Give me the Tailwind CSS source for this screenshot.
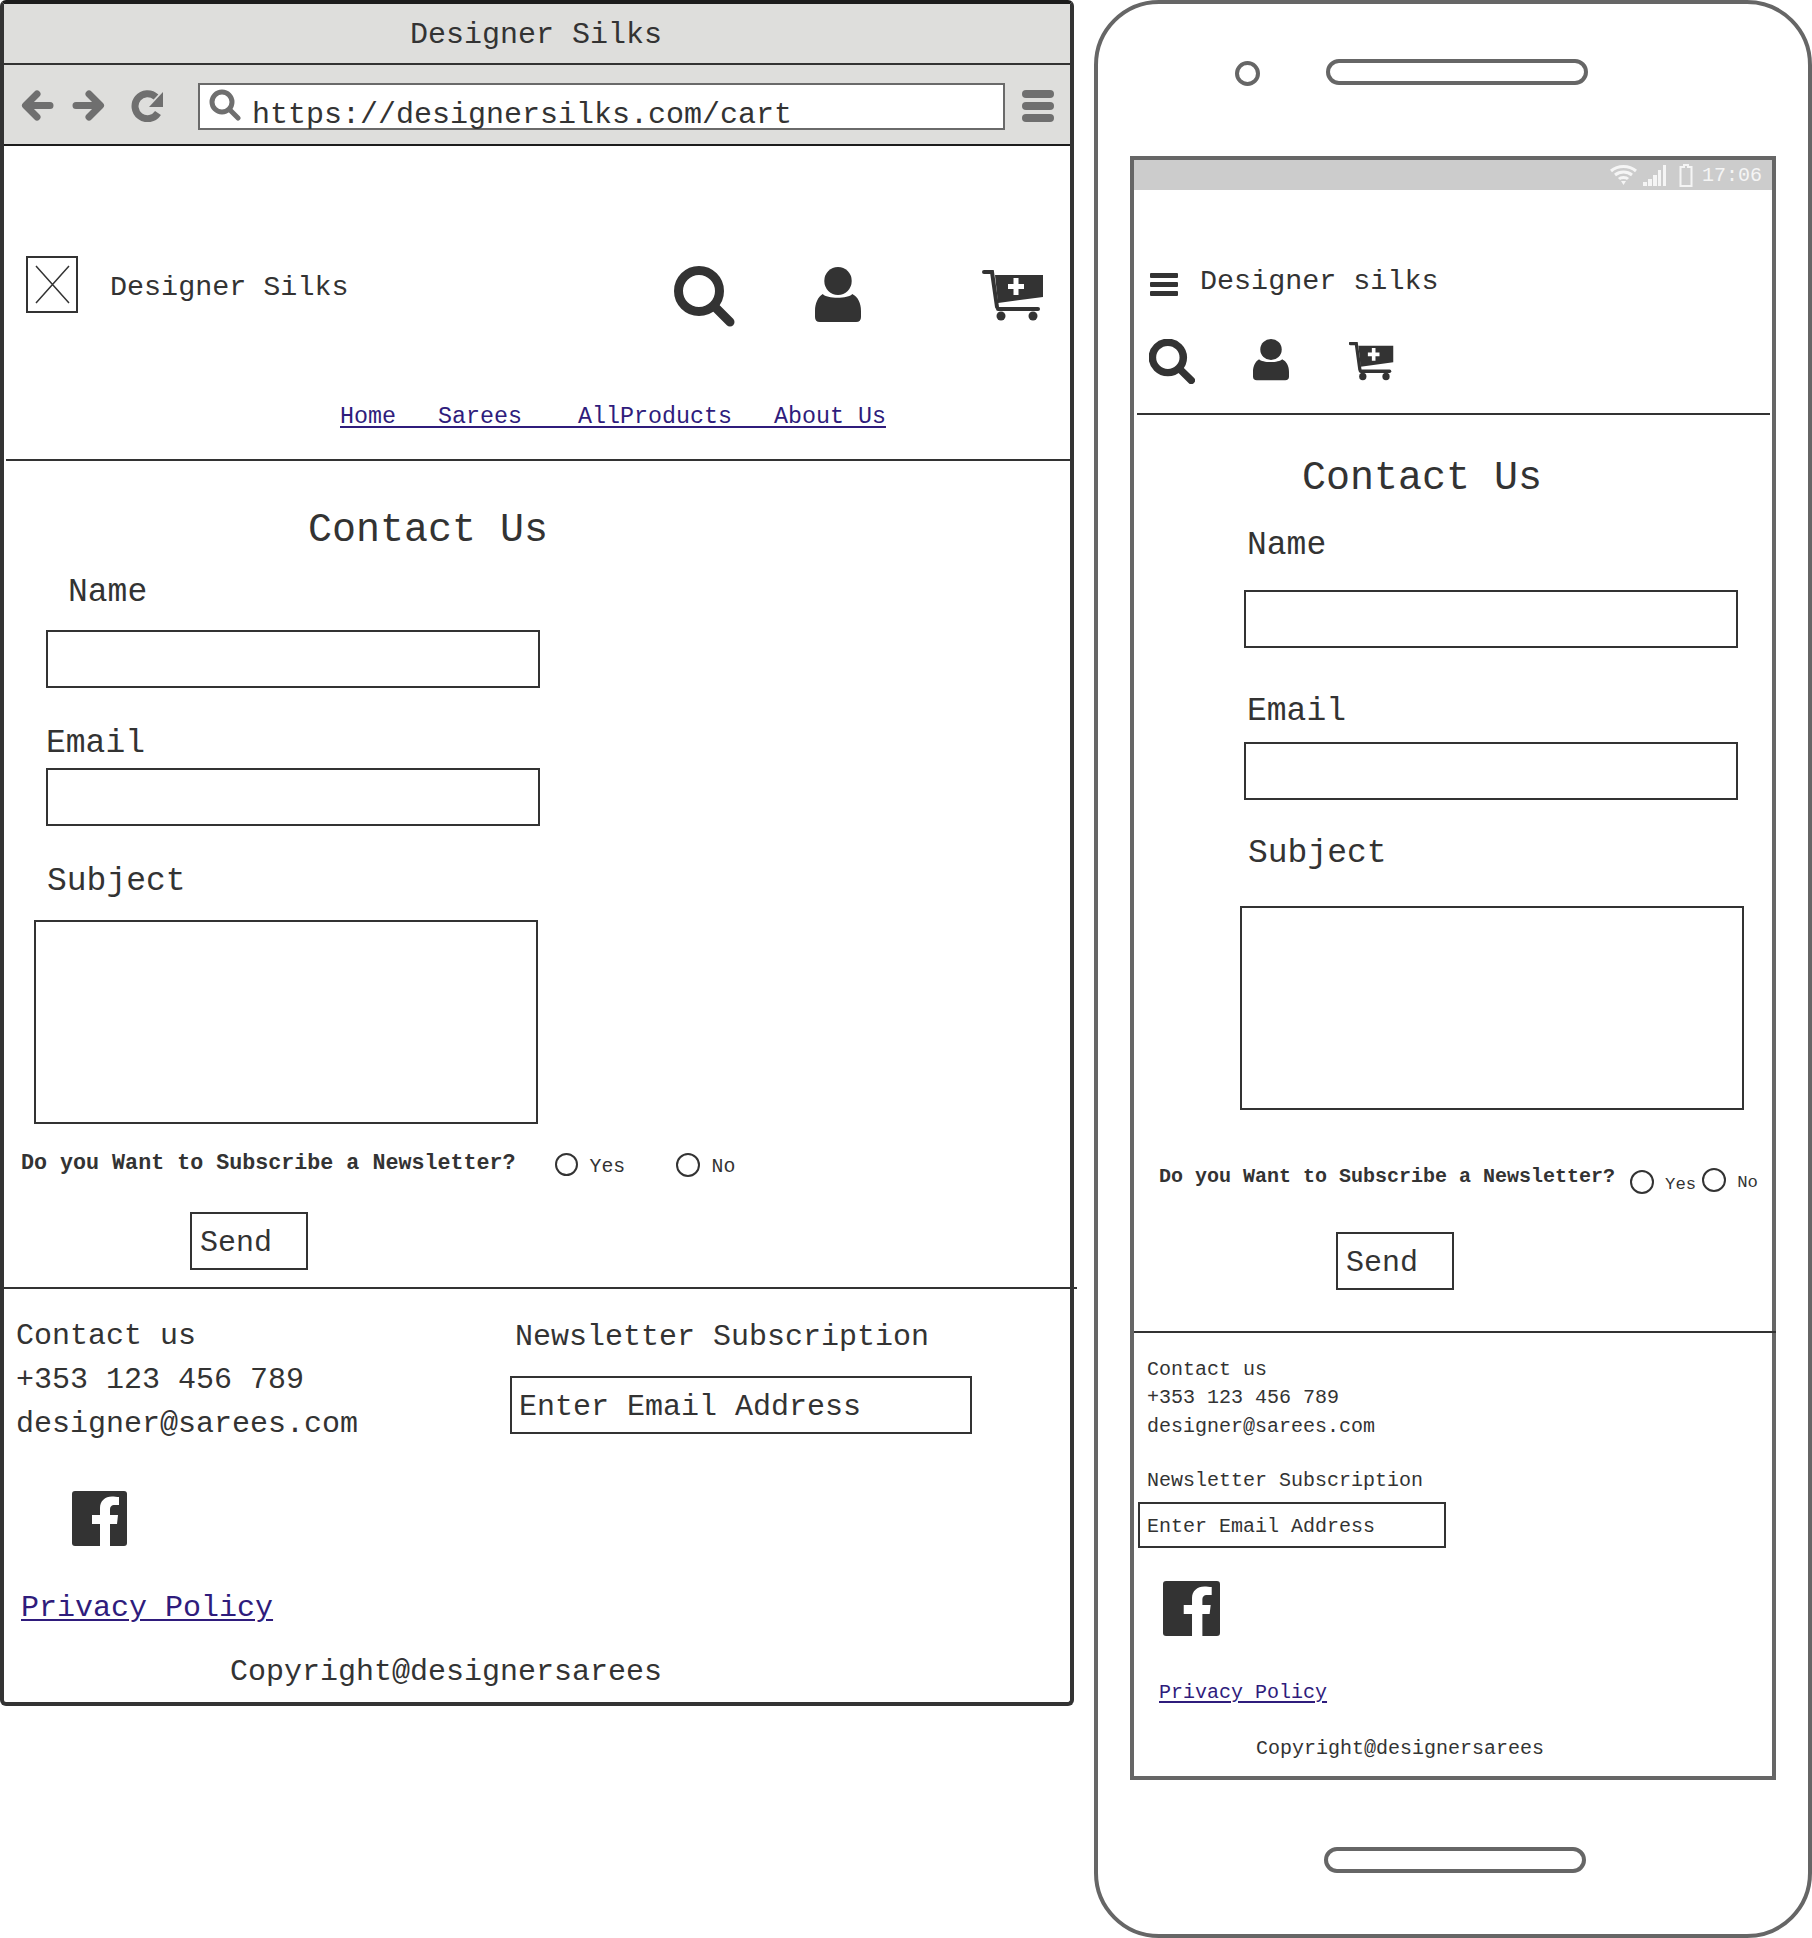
<!DOCTYPE html>
<html lang="en">
<head>
  <meta charset="UTF-8" />
  <title>Designer Silks - Contact Us wireframe</title>
  <script src="https://cdn.jsdelivr.net/npm/@tailwindcss/browser@4"></script>
</head>
<body class="bg-white">
  <div class="flex items-start w-[1812px] h-[1938px] overflow-hidden font-['Liberation_Mono',monospace] text-[#333]">

    <!-- Desktop browser -->
    <div class="w-[1074px] h-[1706px] shrink-0 flex flex-col border-4 border-[#333] border-t-[#1c1c1c] rounded-[6px] bg-white">
      <div class="h-[61px] shrink-0 flex items-center justify-center pt-[2px] pr-[2px] bg-[#dededc] border-b-2 border-[#333] text-[30px] leading-[36px]">Designer Silks</div>
      <div class="h-[81px] shrink-0 flex items-start pl-[17px] bg-[#dededc] border-b-2 border-[#1c1c1c]">
        <svg class="mt-[24px] w-[33px] h-[33px]" viewBox="0 0 33 33" fill="none" stroke="#6f6f6f" stroke-width="7" stroke-linecap="round" stroke-linejoin="round"><path d="M5 16.5H29M16 5L4.5 16.5L16 28"/></svg>
        <svg class="mt-[24px] ml-[18px] w-[33px] h-[33px]" viewBox="0 0 33 33" fill="none" stroke="#6f6f6f" stroke-width="7" stroke-linecap="round" stroke-linejoin="round"><path d="M28 16.5H4M17 5L28.5 16.5L17 28"/></svg>
        <svg class="mt-[24px] ml-[26px] w-[33px] h-[33px]" viewBox="0 0 33 33" fill="none"><path d="M25 8A12.5 12.5 0 1 0 27 24" stroke="#6f6f6f" stroke-width="7"/><path d="M18 18H32V3Z" fill="#6f6f6f"/></svg>
        <div class="mt-[18px] ml-[34px] w-[807px] h-[47px] flex items-start bg-white border-2 border-[#6a6a6a]">
          <svg class="mt-[4px] ml-[9px] w-[32px] h-[32px] shrink-0" viewBox="0 0 32 32" fill="none" stroke="#6f6f6f" stroke-linecap="round"><circle cx="13" cy="13" r="10" stroke-width="5"/><path d="M21 21L29 29" stroke-width="5"/></svg>
          <span class="mt-[12px] ml-[11px] text-[30px] leading-[36px]">https://designersilks.com/cart</span>
        </div>
        <svg class="mt-[24px] ml-[17px] w-[32px] h-[33px]" viewBox="0 0 32 33" fill="#6f6f6f"><rect y="1" width="32" height="8" rx="4"/><rect y="13" width="32" height="8" rx="4"/><rect y="25" width="32" height="8" rx="4"/></svg>
      </div>

      <div class="flex items-start h-[71px] mt-[110px] ml-[22px] shrink-0">
        <div class="w-[52px] h-[57px] shrink-0 border-2 border-[#333]">
          <svg class="w-full h-full" viewBox="0 0 48 53" stroke="#333" stroke-width="1.5"><path d="M8 8L41 45M41 8L8 45"/></svg>
        </div>
        <span class="mt-[15px] ml-[32px] w-[238px] shrink-0 whitespace-nowrap text-[28.4px] leading-[34px]">Designer Silks</span>
        <svg class="mt-[10px] ml-[326px] w-[61px] h-[61px] shrink-0" viewBox="0 0 61 61" fill="none" stroke="#333" stroke-width="9" stroke-linecap="round"><circle cx="25" cy="25" r="20.5"/><path d="M41 41L56 56"/></svg>
        <svg class="mt-[11px] ml-[80px] w-[46px] h-[56px] shrink-0" viewBox="0 0 47 56" preserveAspectRatio="none" fill="#333"><circle cx="23.5" cy="14" r="14"/><path d="M8 27C12 32 34 32 38 27C44 30 47 36 47 44V50Q47 55 42 55H5Q0 55 0 50V44C0 36 3 30 8 27Z"/></svg>
        <svg class="mt-[14px] ml-[121px] w-[62px] h-[52px] shrink-0" viewBox="0 0 62 52"><path d="M2 2H10L15 37" fill="none" stroke="#333" stroke-width="4" stroke-linecap="round"/><path d="M13 5H61V27L16 33Z" fill="#333"/><path d="M16 39H56" stroke="#333" stroke-width="4" stroke-linecap="round"/><circle cx="19" cy="46" r="4.5" fill="#333"/><circle cx="51" cy="46" r="4.5" fill="#333"/><path d="M34 8V25M26 16.5H42" stroke="#fff" stroke-width="5"/></svg>
      </div>

      <nav class="mt-[78px] ml-[336px] h-[24px] shrink-0 text-[23.33px] leading-[24px] text-[#2f1c7c]">
        <a href="#" class="whitespace-pre underline decoration-2 underline-offset-[3px]">Home   Sarees    AllProducts   About Us</a>
      </nav>
      <div class="mt-[30px] ml-[2px] h-[2px] shrink-0 bg-[#333]"></div>

      <h1 class="mt-[46px] ml-[304px] text-[40px] leading-[48px]">Contact Us</h1>
      <label class="mt-[18px] ml-[64px] text-[33px] leading-[40px]">Name</label>
      <div class="mt-[17px] ml-[42px] w-[494px] h-[58px] shrink-0 border-2 border-[#333]"></div>
      <label class="mt-[36px] ml-[42px] text-[33px] leading-[40px]">Email</label>
      <div class="mt-[4px] ml-[42px] w-[494px] h-[58px] shrink-0 border-2 border-[#333]"></div>
      <label class="mt-[36px] ml-[43px] text-[33px] leading-[40px]">Subject</label>
      <div class="mt-[18px] ml-[30px] w-[504px] h-[204px] shrink-0 border-2 border-[#333]"></div>

      <div class="flex items-start mt-[23px] ml-[17px] h-[30px] shrink-0">
        <span class="mt-[2px] text-[21.7px] leading-[30px] font-bold">Do you Want to Subscribe a Newsletter?</span>
        <span class="mt-[6px] ml-[39px] w-[23px] h-[23px] shrink-0 rounded-full border-2 border-[#333]"></span>
        <span class="mt-[8px] ml-[12px] w-[36px] text-[19.8px] leading-[24px]">Yes</span>
        <span class="mt-[6px] ml-[50px] w-[24px] h-[24px] shrink-0 rounded-full border-2 border-[#333]"></span>
        <span class="mt-[8px] ml-[12px] text-[19.8px] leading-[24px]">No</span>
      </div>

      <div class="mt-[35px] ml-[186px] w-[118px] h-[58px] shrink-0 flex items-center pl-[8px] pt-[3px] border-2 border-[#333] text-[30px] leading-[36px]">Send</div>
      <div class="mt-[17px] w-[1073px] h-[2px] shrink-0 bg-[#333]"></div>

      <footer class="flex shrink-0 text-[30px] leading-[36px]">
        <div class="w-[506px] pl-[12px]">
          <p class="mt-[29px]">Contact us</p>
          <p class="mt-[8px]">+353 123 456 789</p>
          <p class="mt-[8px]">designer@sarees.com</p>
        </div>
        <div>
          <p class="mt-[30px] ml-[5px]">Newsletter Subscription</p>
          <div class="mt-[21px] w-[462px] h-[58px] flex items-center pl-[7px] pt-[3px] border-2 border-[#333]">Enter Email Address</div>
        </div>
      </footer>

      <svg class="mt-[49px] ml-[68px] w-[55px] h-[55px] shrink-0" viewBox="0 0 55 55"><rect width="55" height="55" rx="3" fill="#333"/><path d="M38 55V33H45L46 24H38V19C38 16 39 14 43 14H47V6C45 6 42 5.5 40 5.5C33 5.5 28 10 28 17V24H20V33H28V55Z" fill="#fff"/></svg>
      <a href="#" class="mt-[44px] ml-[17px] text-[30px] leading-[36px] underline decoration-2 underline-offset-[3px] text-[#2f1c7c]">Privacy Policy</a>
      <p class="mt-[28px] ml-[226px] text-[30px] leading-[36px]">Copyright@designersarees</p>
    </div>

    <!-- Phone -->
    <div class="ml-[20px] w-[718px] h-[1938px] shrink-0 flex flex-col border-4 border-[#666] rounded-[65px] bg-white">
      <div class="flex items-start mt-[55px] ml-[137px] h-[26px] shrink-0">
        <span class="mt-[2px] w-[25px] h-[25px] shrink-0 rounded-full border-4 border-[#666]"></span>
        <span class="ml-[66px] w-[262px] h-[26px] shrink-0 rounded-full border-4 border-[#666]"></span>
      </div>

      <div class="mt-[71px] ml-[32px] w-[646px] h-[1624px] shrink-0 flex flex-col border-4 border-[#666]">
        <div class="h-[30px] shrink-0 flex items-center justify-end pr-[10px] bg-[#cccccc] text-[#f5f5f5]">
          <svg class="w-[27px] h-[20px]" viewBox="0 0 27 20" fill="none" stroke="#f5f5f5" stroke-width="3"><path d="M1 6C8 0 19 0 26 6M5 10C10 6 17 6 22 10M9 14C11 12 16 12 18 14"/><path d="M11 16H16L13.5 20Z" fill="#f5f5f5" stroke="none"/></svg>
          <svg class="ml-[6px] w-[24px] h-[21px]" viewBox="0 0 24 21" fill="#f5f5f5"><rect x="0" y="17" width="4" height="4"/><rect x="5" y="14" width="4" height="7"/><rect x="10" y="10" width="4" height="11"/><rect x="15" y="5" width="3" height="16"/><rect x="20" y="0" width="3" height="21"/></svg>
          <svg class="ml-[12px] w-[14px] h-[23px]" viewBox="0 0 14 23" fill="none" stroke="#f5f5f5" stroke-width="2"><path d="M5 1H9V3H12.5V22H1.5V3H5Z"/></svg>
          <span class="ml-[9px] pt-[2px] text-[20px] leading-[24px]">17:06</span>
        </div>

        <div class="flex items-start mt-[75px] ml-[16px] h-[34px] shrink-0">
          <svg class="mt-[8px] w-[28px] h-[23px] shrink-0" viewBox="0 0 28 23" fill="#333"><rect width="28" height="5" rx="1"/><rect y="9" width="28" height="5" rx="1"/><rect y="18" width="28" height="5" rx="1"/></svg>
          <span class="ml-[22px] text-[28.4px] leading-[34px]">Designer silks</span>
        </div>
        <div class="flex items-start mt-[40px] ml-[15px] h-[45px] shrink-0">
          <svg class="w-[46px] h-[45px] shrink-0" viewBox="0 0 61 61" preserveAspectRatio="none" fill="none" stroke="#333" stroke-width="10" stroke-linecap="round"><circle cx="25" cy="25" r="20.5"/><path d="M41 41L56 56"/></svg>
          <svg class="ml-[58px] w-[36px] h-[42px] shrink-0" viewBox="0 0 47 56" preserveAspectRatio="none" fill="#333"><circle cx="23.5" cy="14" r="14"/><path d="M8 27C12 32 34 32 38 27C44 30 47 36 47 44V50Q47 55 42 55H5Q0 55 0 50V44C0 36 3 30 8 27Z"/></svg>
          <svg class="mt-[3px] ml-[60px] w-[45px] h-[39px] shrink-0" viewBox="0 0 62 52" preserveAspectRatio="none"><path d="M2 2H10L15 37" fill="none" stroke="#333" stroke-width="4.5" stroke-linecap="round"/><path d="M13 5H61V27L16 33Z" fill="#333"/><path d="M16 39H56" stroke="#333" stroke-width="4.5" stroke-linecap="round"/><circle cx="19" cy="46" r="5" fill="#333"/><circle cx="51" cy="46" r="5" fill="#333"/><path d="M34 8V25M26 16.5H42" stroke="#fff" stroke-width="5"/></svg>
        </div>
        <div class="mt-[29px] ml-[3px] w-[633px] h-[2px] shrink-0 bg-[#333]"></div>

        <h1 class="mt-[40px] ml-[168px] text-[40px] leading-[48px]">Contact Us</h1>
        <label class="mt-[23px] ml-[113px] text-[33px] leading-[40px]">Name</label>
        <div class="mt-[24px] ml-[110px] w-[494px] h-[58px] shrink-0 border-2 border-[#333]"></div>
        <label class="mt-[44px] ml-[113px] text-[33px] leading-[40px]">Email</label>
        <div class="mt-[10px] ml-[110px] w-[494px] h-[58px] shrink-0 border-2 border-[#333]"></div>
        <label class="mt-[34px] ml-[114px] text-[33px] leading-[40px]">Subject</label>
        <div class="mt-[32px] ml-[106px] w-[504px] h-[204px] shrink-0 border-2 border-[#333]"></div>

        <div class="flex items-start mt-[50px] ml-[25px] h-[30px] shrink-0">
          <span class="mt-[2px] text-[20px] leading-[30px] font-bold">Do you Want to Subscribe a Newsletter?</span>
          <span class="mt-[10px] ml-[15px] w-[24px] h-[24px] shrink-0 rounded-full border-2 border-[#333]"></span>
          <span class="mt-[15px] ml-[11px] text-[17.3px] leading-[20px]">Yes</span>
          <span class="mt-[8px] ml-[6px] w-[24px] h-[24px] shrink-0 rounded-full border-2 border-[#333]"></span>
          <span class="mt-[13px] ml-[11px] text-[17.3px] leading-[20px]">No</span>
        </div>

        <div class="mt-[42px] ml-[202px] w-[118px] h-[58px] shrink-0 flex items-center pl-[8px] pt-[3px] border-2 border-[#333] text-[30px] leading-[36px]">Send</div>
        <div class="mt-[41px] w-[642px] h-[2px] shrink-0 bg-[#333]"></div>

        <div class="text-[20px] leading-[24px]">
          <p class="mt-[25px] ml-[13px]">Contact us</p>
          <p class="mt-[4px] ml-[13px]">+353 123 456 789</p>
          <p class="mt-[5px] ml-[13px]">designer@sarees.com</p>
          <p class="mt-[30px] ml-[13px]">Newsletter Subscription</p>
          <div class="mt-[9px] ml-[4px] w-[308px] h-[46px] flex items-center pl-[7px] pt-[3px] border-2 border-[#333]">Enter Email Address</div>
        </div>
        <svg class="mt-[33px] ml-[29px] w-[57px] h-[55px] shrink-0" viewBox="0 0 55 55" preserveAspectRatio="none"><rect width="55" height="55" rx="3" fill="#333"/><path d="M38 55V33H45L46 24H38V19C38 16 39 14 43 14H47V6C45 6 42 5.5 40 5.5C33 5.5 28 10 28 17V24H20V33H28V55Z" fill="#fff"/></svg>
        <a href="#" class="mt-[45px] ml-[25px] text-[20px] leading-[24px] underline decoration-2 underline-offset-[3px] text-[#2f1c7c]">Privacy Policy</a>
        <p class="mt-[32px] ml-[122px] text-[20px] leading-[24px]">Copyright@designersarees</p>
      </div>

      <div class="mt-[67px] ml-[226px] w-[262px] h-[26px] shrink-0 rounded-full border-4 border-[#666]"></div>
    </div>
  </div>
</body>
</html>
